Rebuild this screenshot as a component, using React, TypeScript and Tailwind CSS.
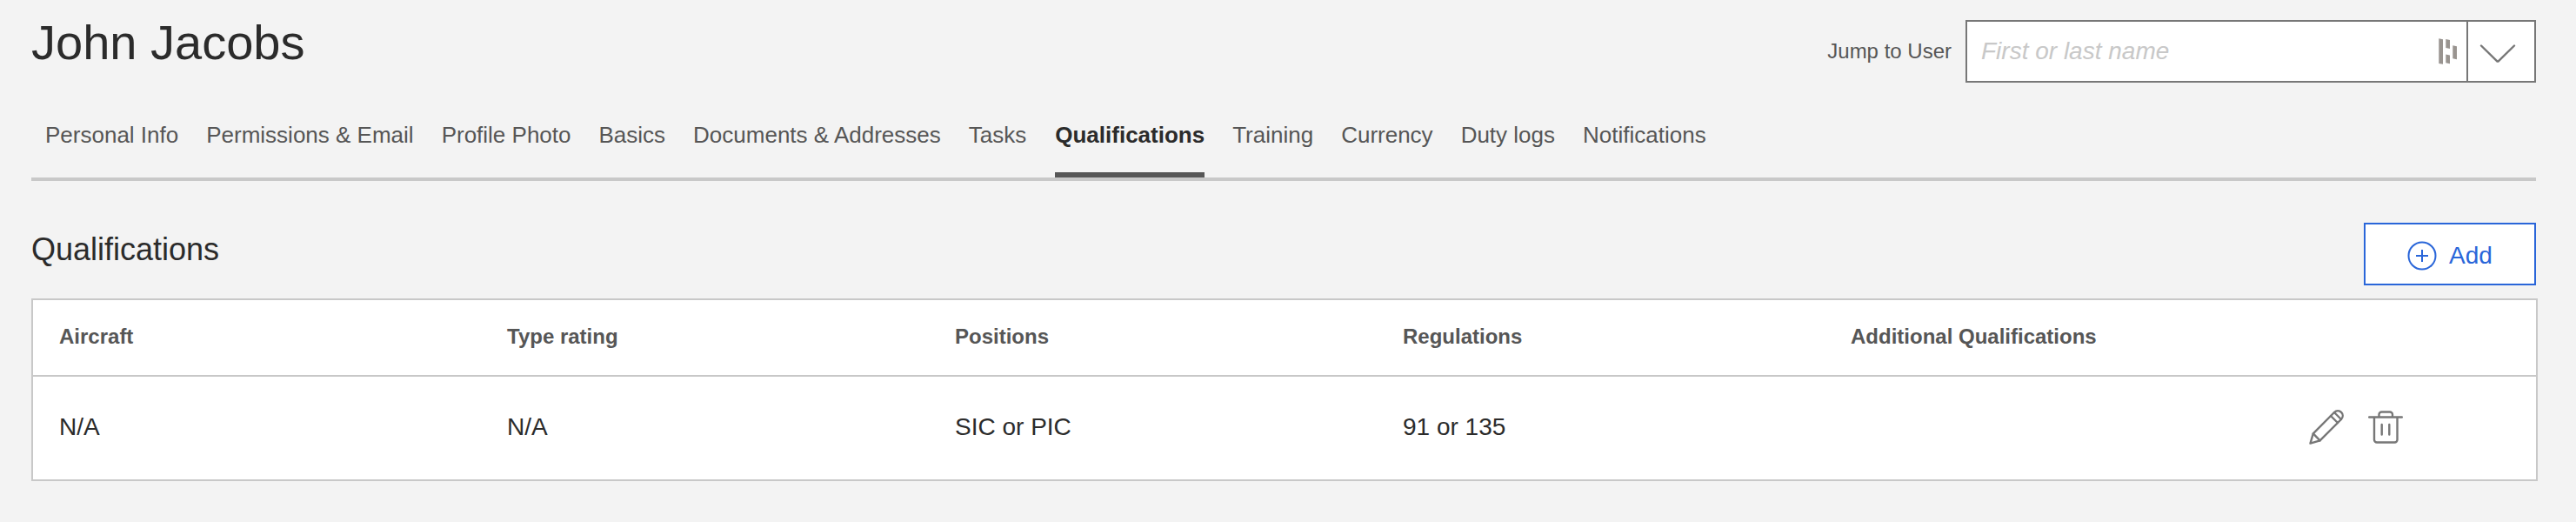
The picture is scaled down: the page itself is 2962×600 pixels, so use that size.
import React from "react";

const tabs = [
  "Personal Info",
  "Permissions & Email",
  "Profile Photo",
  "Basics",
  "Documents & Addresses",
  "Tasks",
  "Qualifications",
  "Training",
  "Currency",
  "Duty logs",
  "Notifications",
];

const columns = ["Aircraft", "Type rating", "Positions", "Regulations", "Additional Qualifications"];
const rows = [["N/A", "N/A", "SIC or PIC", "91 or 135", ""]];

function PencilIcon() {
  return (
    <svg width="40" height="40" viewBox="0 0 40 40" fill="none" stroke="#777777" strokeWidth="2.4" strokeLinecap="round" strokeLinejoin="round">
      <path d="M1.5 38.6 4.8 27.4 29 3C31.5 0.6 35 0.8 37.1 2.9 39.3 5.1 39.4 8.5 37 11L12.6 35.4Z" />
      <path d="M4.8 27.4 12.6 35.4M25 7 33 15M29 3 37 11" />
    </svg>
  );
}

function TrashIcon() {
  return (
    <svg width="40" height="40" viewBox="0 0 40 40" fill="none" stroke="#777777" strokeWidth="2.4" strokeLinecap="round" strokeLinejoin="round">
      <path d="M1.2 8.5H38.8M12.5 8V5.5a3 3 0 0 1 3-3H25a3 3 0 0 1 3 3V8M7 9V34.5a3 3 0 0 0 3 3H30.5a3 3 0 0 0 3-3V9M15.7 17V28.5M24.3 17V28.5" />
    </svg>
  );
}

function PlusCircleIcon() {
  return (
    <svg width="34" height="34" viewBox="0 0 34 34" fill="none" stroke="#2a66d9" strokeWidth="2">
      <circle cx="17" cy="17" r="15.5" />
      <path d="M17 10V24M10 17H24" />
    </svg>
  );
}

function AutofillIcon() {
  return (
    <svg width="22" height="30" viewBox="0 0 22 30" fill="#999490">
      <path d="M0.3 0.3 5 1.2V29.8L0.3 28.9ZM8.3 1 13 1.9V11.9L8.3 11ZM8.3 18.5 13 19.4V29.2L8.3 28.3ZM16.3 8.3 21 9.2V24.2L16.3 23.3Z" />
    </svg>
  );
}

function ChevronIcon() {
  return (
    <svg width="42" height="22" viewBox="0 0 42 22" fill="none" stroke="#777777" strokeWidth="2.4" strokeLinecap="round" strokeLinejoin="round">
      <path d="M2 1.5 20 19.2Q21 20 22 19.2L40 1.5" />
    </svg>
  );
}

export default function App() {
  return (
    <div className="h-[600px] w-full bg-[#f3f3f3] pl-9 font-['Liberation_Sans',Arial,sans-serif] text-[#2b2b2b]">
      <header className="flex h-[137px] w-[2880px] items-start justify-between">
        <h1 className="pt-[17px] text-[56px] leading-[64px]">John Jacobs</h1>
        <div className="flex items-center pt-[23px]">
          <label htmlFor="jump" className="mr-4 text-[24px] leading-[32px] text-[#565656]">
            Jump to User
          </label>
          <div className="flex h-[72px] w-[656px] border-2 border-[#777777] bg-white">
            <div className="flex flex-1 items-center">
              <input
                id="jump"
                placeholder="First or last name"
                className="h-full min-w-0 flex-1 bg-transparent pl-4 text-[28px] italic outline-none placeholder:text-[#c8c8c8] placeholder:opacity-100"
              />
              <span className="mr-[10px]">
                <AutofillIcon />
              </span>
            </div>
            <button type="button" aria-label="Open user list" className="flex w-[78px] items-center justify-start border-l-2 border-[#777777] pt-[6px] pl-[13px]">
              <ChevronIcon />
            </button>
          </div>
        </div>
      </header>

      <nav className="flex h-[71px] w-[2880px] gap-8 border-b-4 border-[#c8c8c8] pl-4 text-[26px] leading-[36px] text-[#565656]">
        {tabs.map((tab) => (
          <a
            key={tab}
            className={
              tab === "Qualifications"
                ? "ml-px border-b-[6px] border-[#565656] font-bold whitespace-nowrap text-[#2b2b2b]"
                : "whitespace-nowrap"
            }
          >
            {tab}
          </a>
        ))}
      </nav>

      <section>
        <div className="flex h-[135px] w-[2880px] items-start justify-between">
          <h2 className="pt-[57px] text-[36px] leading-[44px]">Qualifications</h2>
          <button type="button" className="mt-12 flex h-[72px] w-[198px] items-center justify-center gap-[14px] border-2 border-[#2a66d9] bg-white pt-1 text-[28px] leading-[36px] text-[#2a66d9]">
            <PlusCircleIcon />
            <span>Add</span>
          </button>
        </div>

        <div className="w-[2882px] border-2 border-[#c8c8c8] bg-white">
          <div className="grid h-[88px] grid-cols-[repeat(5,515px)_1fr] items-center border-b-2 border-[#c8c8c8] pb-[2px] text-[24px] leading-[32px] font-bold text-[#565656]">
            {columns.map((column) => (
              <div key={column} className="pl-[30px]">
                {column}
              </div>
            ))}
          </div>
          {rows.map((row, index) => (
            <div key={index} className="grid h-[118px] grid-cols-[repeat(5,515px)_1fr] items-center pb-[2px] text-[28px] leading-[36px]">
              {row.map((cell, cellIndex) => (
                <div key={cellIndex} className="pl-[30px]">
                  {cell}
                </div>
              ))}
              <div className="flex gap-7 pl-[42px]">
                <button type="button" aria-label="Edit">
                  <PencilIcon />
                </button>
                <button type="button" aria-label="Delete">
                  <TrashIcon />
                </button>
              </div>
            </div>
          ))}
        </div>
      </section>
    </div>
  );
}
